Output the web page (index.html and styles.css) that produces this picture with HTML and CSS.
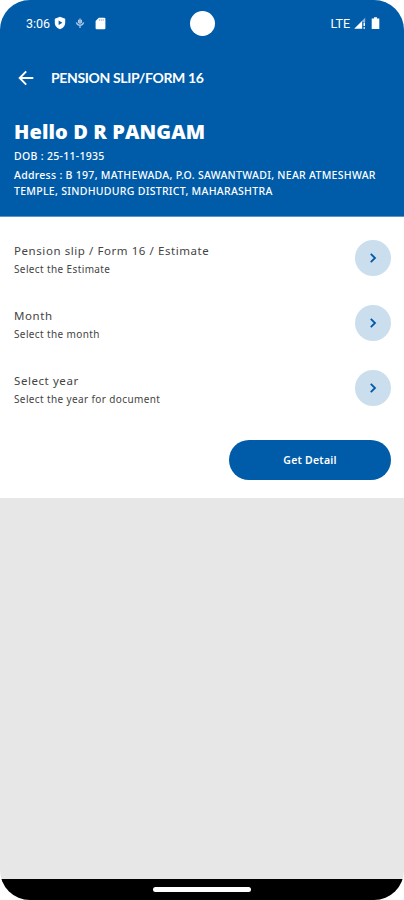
FILE: index.html
```html
<!DOCTYPE html>
<html lang="en">
<head>
<meta charset="utf-8">
<title>Pension Slip</title>
<link rel="stylesheet" href="styles.css">
</head>
<body>
<div class="phone">
  <header class="hero">
    <div class="status">
      <span class="time">3:06</span>
      <svg class="shield" width="12" height="14" viewBox="0 0 12 14"><path fill="#fff" d="M6 .8 11.2 2.7V6.5C11.2 10 8.8 12.3 6 13.3 3.2 12.3.8 10 .8 6.5V2.7Z"/><path fill="#005ca9" d="M4.6 4.5 8.4 6.7 4.6 8.9Z"/></svg>
      <svg class="mic" width="10" height="12" viewBox="0 0 10 12" fill="none" stroke="#a9c4e6" stroke-width="1.3"><path d="M5 1.4V7M3.6 2.8V6.2M6.4 2.8V6.2M1.4 5.3Q2 8.2 5 8.2T8.6 5.3M5 8V11"/></svg>
      <svg class="card" width="11" height="13" viewBox="0 0 11 13"><path fill="#fff" d="M3.8.8H9.2Q10.4.8 10.4 2V11.2Q10.4 12.3 9.2 12.3H1.8Q.6 12.3.6 11.2V4Z"/><path stroke="#8fb3da" stroke-width=".8" d="M4.4 2V4M6.3 2V4M8.2 2V4"/></svg>
      <span class="network">LTE</span>
      <svg class="signal" width="12" height="12" viewBox="0 0 12 12"><path fill="#fff" d="M.2 11.7 8.2 3.7V11.7Z"/><path fill="#8fb3da" d="M8.2 3.7 11.2.7V5H8.2Z"/><path fill="#fff" d="M9.5 5.5H11V9H9.5ZM9.5 10.2H11V11.7H9.5Z"/></svg>
      <svg class="battery" width="9" height="12" viewBox="0 0 9 12"><path fill="#fff" d="M3 .2H6V1.4H8.3V12H.7V1.4H3Z"/></svg>
      <span class="camera"></span>
    </div>
    <div class="bar">
      <svg class="back" width="16" height="16" viewBox="0 0 16 16" fill="none" stroke="#fff" stroke-width="1.9"><path d="M15.3 8H2M8.2 1.4 1.7 8 8.2 14.6"/></svg>
      <h1>PENSION SLIP/FORM 16</h1>
    </div>
    <h2>Hello D R PANGAM</h2>
    <p class="dob">DOB : 25-11-1935</p>
    <p class="address">Address : B 197, MATHEWADA, P.O. SAWANTWADI, NEAR ATMESHWAR<br>TEMPLE, SINDHUDURG DISTRICT, MAHARASHTRA</p>
  </header>
  <main>
    <section class="row">
      <div><h3>Pension slip / Form 16 / Estimate</h3><p>Select the Estimate</p></div>
      <button class="go" aria-label="Open"><svg width="10" height="12" viewBox="0 0 10 12"><path d="M2.8 1.8 7 6 2.8 10.2"/></svg></button>
    </section>
    <section class="row">
      <div><h3>Month</h3><p>Select the month</p></div>
      <button class="go" aria-label="Open"><svg width="10" height="12" viewBox="0 0 10 12"><path d="M2.8 1.8 7 6 2.8 10.2"/></svg></button>
    </section>
    <section class="row">
      <div><h3>Select year</h3><p>Select the year for document</p></div>
      <button class="go" aria-label="Open"><svg width="10" height="12" viewBox="0 0 10 12"><path d="M2.8 1.8 7 6 2.8 10.2"/></svg></button>
    </section>
    <button class="submit">Get Detail</button>
  </main>
  <div class="rest"></div>
  <footer><span class="pill"></span></footer>
</div>
</body>
</html>
```
FILE: styles.css
```css
* { box-sizing: border-box; margin: 0; padding: 0; }
body { background: #fff; font-family: "Noto Sans", sans-serif; }
.phone { width: 404px; height: 900px; display: flex; flex-direction: column; overflow: hidden; border-radius: 30px; background: #e7e7e7; }
.hero { height: 217px; background: #005ca9; color: #fff; white-space: nowrap; border-bottom: 1px solid #5b94c8; }
.status { position: relative; height: 46px; display: flex; align-items: center; padding: 0 24px 0 26px; font-family: Roboto, sans-serif; font-size: 12.5px; }
.time { width: 28px; }
.mic { margin-left: 9px; }
.card { margin-left: 10px; }
.network { margin-left: auto; font-size: 12.5px; font-weight: 400; }
.signal { margin-left: 4px; }
.battery { margin-left: 5px; }
.camera { position: absolute; left: 190px; top: 11px; width: 25px; height: 25px; border-radius: 50%; background: #fff; }
.bar { height: 63px; display: flex; align-items: center; padding-left: 18px; }
h1 { margin-left: 17px; font: 700 14px/20px Lato, sans-serif; letter-spacing: -.35px; }
h2 { margin: 9px 0 0 14px; height: 28px; font: 800 20px/28px "Open Sans", "Noto Sans", sans-serif; letter-spacing: .1px; }
.dob { margin: 2px 0 0 14px; height: 16px; font-size: 10.5px; line-height: 16px; font-weight: 500; letter-spacing: .3px; }
.address { margin: 3px 0 0 14px; font-size: 10.5px; line-height: 16px; font-weight: 500; letter-spacing: .29px; }
main { height: 281px; padding: 8px 13px 0 14px; background: #fff; }
.row { height: 65px; display: flex; align-items: center; justify-content: space-between; }
.row > div { padding-top: 4px; color: #444; }
h3 { font-size: 11.5px; line-height: 18px; font-weight: 400; letter-spacing: .57px; }
.row p { font-size: 10px; line-height: 18px; letter-spacing: .38px; }
.go { width: 36px; height: 36px; border: 0; border-radius: 50%; background: #cadeed; display: grid; place-items: center; }
.go path { fill: none; stroke: #0059a8; stroke-width: 1.8; }
.submit { display: block; width: 162px; height: 40px; margin: 20px 0 0 auto; border: 0; border-radius: 20px; background: #005ca9; color: #fff; font: 600 10.5px/40px "Noto Sans", sans-serif; letter-spacing: .25px; }
.rest { flex: 1; }
footer { height: 21px; background: #000; display: flex; justify-content: center; padding-top: 8px; }
.pill { width: 98px; height: 5px; border-radius: 3px; background: #fff; }
```
